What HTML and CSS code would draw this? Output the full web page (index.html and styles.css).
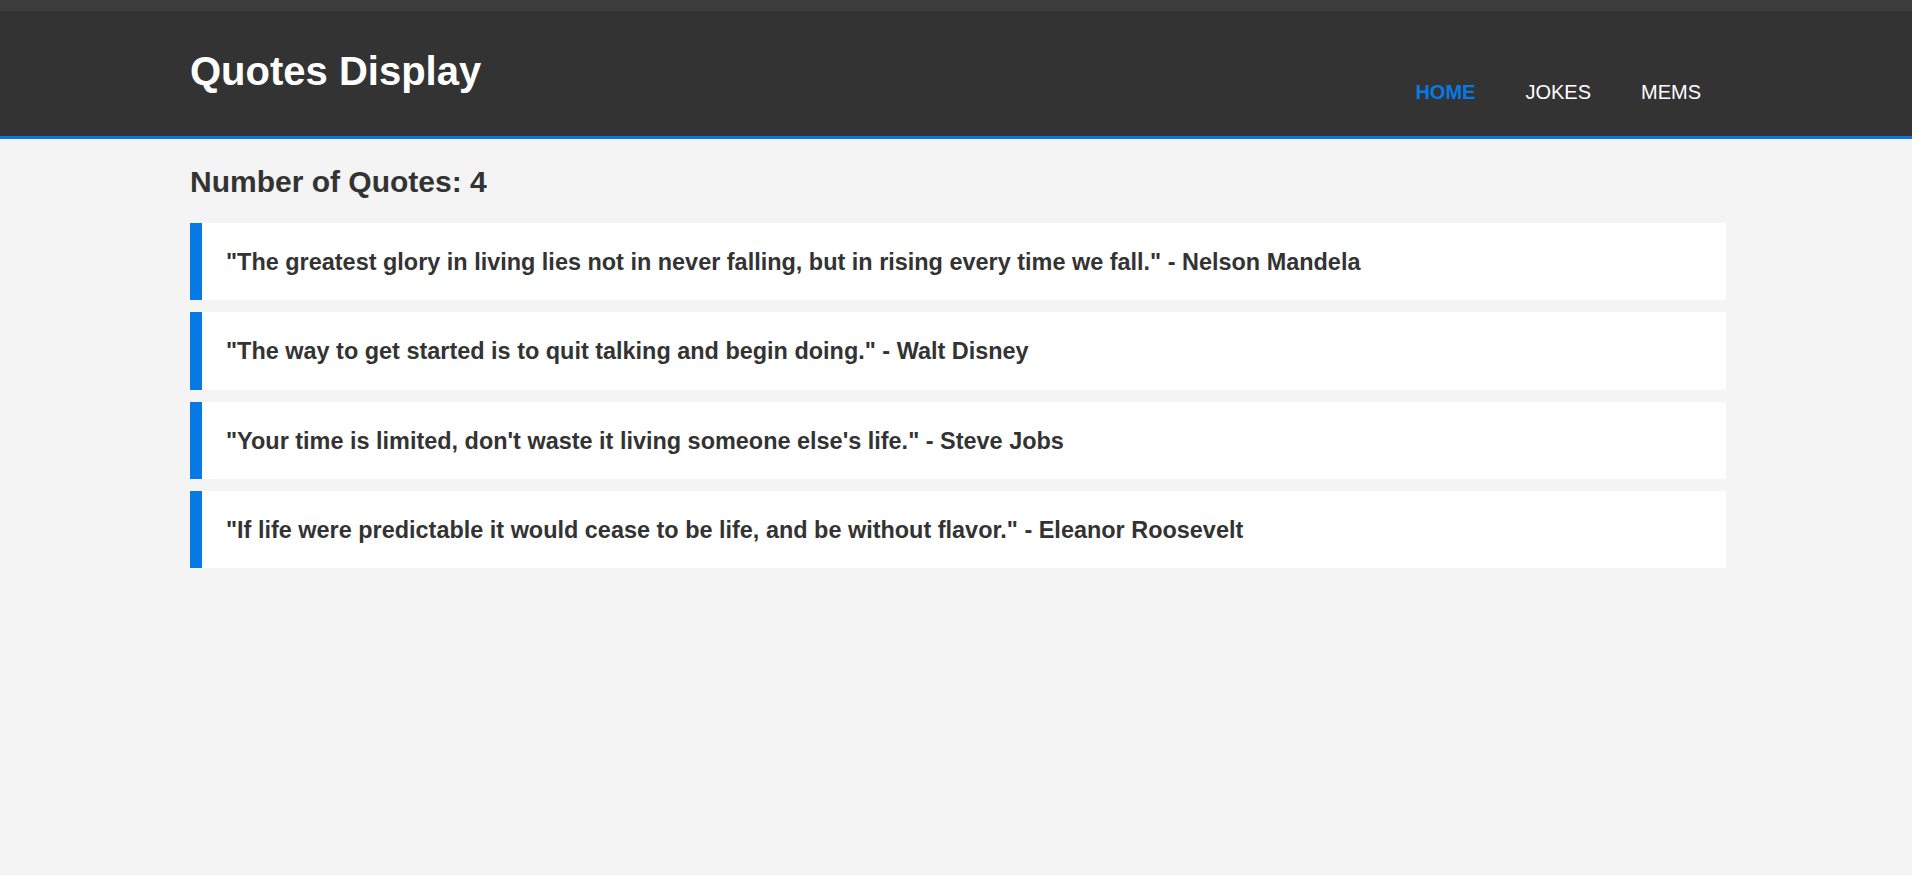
FILE: index.html
```html
<!DOCTYPE html>
<html lang="en">
<head>
<meta charset="utf-8">
<title>Quotes Display</title>
<link rel="stylesheet" href="styles.css">
</head>
<body>
<div class="topbar"></div>
<header class="site-header">
  <div class="container header-inner">
    <h1 class="brand">Quotes Display</h1>
    <nav class="nav">
      <a class="nav-link current" href="#">Home</a>
      <a class="nav-link" href="#">Jokes</a>
      <a class="nav-link" href="#">Mems</a>
    </nav>
  </div>
</header>
<main class="container">
  <h2 class="count">Number of Quotes: 4</h2>
  <div class="quote">"The greatest glory in living lies not in never falling, but in rising every time we fall." - Nelson Mandela</div>
  <div class="quote">"The way to get started is to quit talking and begin doing." - Walt Disney</div>
  <div class="quote">"Your time is limited, don't waste it living someone else's life." - Steve Jobs</div>
  <div class="quote">"If life were predictable it would cease to be life, and be without flavor." - Eleanor Roosevelt</div>
</main>
</body>
</html>
```
FILE: styles.css
```css
html, body {
  margin: 0;
  padding: 0;
}
body {
  background: #f4f4f4;
  font-family: "Liberation Sans", Arial, sans-serif;
  color: #333;
}
.container {
  width: 1536px;
  margin: 0 186px 0 190px;
}
.topbar {
  height: 11px;
  background: #3c3c3c;
}
.site-header {
  background: #333;
  height: 125px;
  border-bottom: 3px solid #0779e4;
}
.header-inner {
  display: flex;
  justify-content: space-between;
  align-items: flex-start;
  padding-top: 37px;
}
.brand {
  margin: 0;
  font-size: 40px;
  line-height: 46px;
  font-weight: bold;
  color: #fff;
}
.nav {
  display: flex;
  margin-top: 33px;
}
.nav-link {
  padding: 0 25px;
  font-size: 20px;
  line-height: 23px;
  color: #fff;
  text-decoration: none;
  text-transform: uppercase;
}
.nav-link.current {
  color: #0779e4;
  font-weight: bold;
}
.count {
  margin: 25px 0 24px;
  font-size: 30px;
  line-height: 35px;
  font-weight: bold;
  color: #333;
}
.quote {
  background: #fff;
  border-left: 12px solid #0779e4;
  padding: 26px 24px 24px;
  margin-bottom: 12px;
  font-size: 23.45px;
  line-height: 27.3px;
  font-weight: bold;
  color: #333;
}
```
